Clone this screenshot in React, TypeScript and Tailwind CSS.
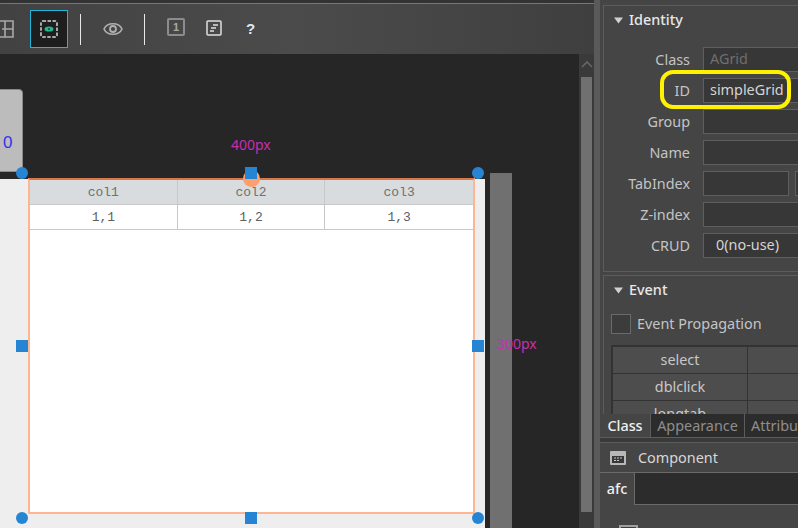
import React from 'react';

const Arrow = () => (
  <svg width="11" height="7" viewBox="0 0 11 7" className="shrink-0">
    <path d="M1 0.5h9l-4.5 6z" fill="#d0d0d0" />
  </svg>
);

const Handle = ({ cls, round }: { cls: string; round?: boolean }) => (
  <div className={`absolute w-[12px] h-[12px] bg-[#2685d3] ${round ? 'rounded-full' : ''} ${cls}`} />
);

const Field = ({ label, value, dim, short, inset }: { label: string; value?: string; dim?: boolean; short?: boolean; inset?: boolean }) => (
  <div className="flex items-center h-[31px]">
    <div className="w-[86px] text-right text-[#c4c4c4] shrink-0">{label}</div>
    <div
      className={`ml-[13px] h-[25px] shrink-0 border border-[#5e5e5e] bg-[#373737] flex items-center pb-[1px] ${inset ? 'pl-[12px]' : 'pl-[6px]'} ${short ? 'w-[86px]' : 'w-[110px]'} ${
        dim ? 'text-[#6e6e6e]' : 'text-[#d4d4d4]'
      }`}
    >
      {value}
    </div>
    {short && <div className="ml-[6px] w-[20px] h-[25px] shrink-0 border border-[#5e5e5e] bg-[#373737]" />}
  </div>
);

const Toolbar = () => (
  <div className="h-[54px] shrink-0 flex flex-col bg-[#3c3c3c]">
    <div className="h-[3px] bg-[#333333]" />
    <div className="h-[1px] bg-[#777777]" />
    <div className="flex-1 flex items-center bg-gradient-to-r from-[#424242] via-[#4b4b4b] to-[#3f3f3f]">
      <svg width="14" height="18" viewBox="0 0 14 18" className="ml-0 mr-[16px]">
        <path d="M-2 1h15v16H-2M2 9h11M5 1v16" fill="none" stroke="#a8a8a8" strokeWidth="1.6" />
      </svg>
      <div className="w-[38px] h-[38px] bg-[#1e1e1e] border border-[#22b5dc] flex items-center justify-center">
        <svg width="18" height="18" viewBox="0 0 18 18">
          <rect x="1" y="1" width="16" height="16" rx="1.5" fill="none" stroke="#a8a8a8" strokeWidth="2" strokeDasharray="3.5 1.5" />
          <ellipse cx="9" cy="9" rx="4.5" ry="2.6" fill="#25b68f" />
          <circle cx="9" cy="9" r="1" fill="#12443a" />
        </svg>
      </div>
      <div className="ml-[12px] w-[1px] h-[31px] bg-[#e8e8e8]" />
      <svg width="20" height="14" viewBox="0 0 20 14" className="ml-[22px]">
        <path d="M1 7c3-7 15-7 18 0c-3 7-15 7-18 0z" fill="none" stroke="#b0b0b0" strokeWidth="1.6" />
        <circle cx="10" cy="7" r="3" fill="none" stroke="#b0b0b0" strokeWidth="1.8" />
      </svg>
      <div className="ml-[21px] w-[1px] h-[31px] bg-[#e8e8e8]" />
      <div className="ml-[22px] mb-[4px] w-[18px] h-[18px] rounded-[2px] border-2 border-[#8c8c8c] flex items-center justify-center text-[11px] font-bold text-[#a8a8a8] font-['Liberation_Sans']">
        1
      </div>
      <svg width="16" height="16" viewBox="0 0 16 16" className="ml-[21px] mb-[2px]">
        <rect x="1" y="1" width="14" height="14" rx="1" fill="none" stroke="#e0e0e0" strokeWidth="1.5" />
        <path d="M7 5h5M5 8h5M4 11h4" fill="none" stroke="#e0e0e0" strokeWidth="1.5" />
      </svg>
      <div className="ml-[24px] text-[15px] font-bold text-[#e4e8f0] font-['Liberation_Sans']">?</div>
    </div>
  </div>
);

const GridCell = ({ children, head, last }: { children: string; head?: boolean; last?: boolean }) => (
  <div
    className={`flex items-center justify-center pt-[1px] border-b border-[#c8c8c8] ${last ? '' : 'border-r'} ${
      head ? 'h-[25px] bg-[#d8dcde] text-[#707070]' : 'h-[25px] bg-white text-[#606060]'
    }`}
  >
    {children}
  </div>
);

const Canvas = () => (
  <div className="relative flex-1 bg-[#262626] overflow-hidden">
    {/* previous component on the stage */}
    <div className="absolute left-[-10px] top-[35px] w-[33px] h-[83px] bg-[#bcbcbc] rounded-[4px] border border-[#8a8a8a]" />
    <div className="absolute left-[3px] top-[79px] text-[17px] leading-[20px] text-[#3333ee] font-['Liberation_Sans']">0</div>
    <div className="absolute left-[490px] top-[119px] w-[22px] h-[355px] bg-[#707070]" />
    <div className="absolute left-[231px] top-[82px] text-[14px] leading-[18px] text-[#c72fb0] font-['Noto_Sans']">400px</div>
    <div className="absolute left-[497px] top-[281px] text-[14px] leading-[18px] text-[#c72fb0] font-['Noto_Sans']">300px</div>

    {/* stage */}
    <div className="absolute left-0 top-[125px] w-[485px] h-[349px] bg-[#eeeeee]" />
    <div className="absolute left-[28px] top-[124px] w-[447px] h-[336px] bg-white border-2 border-[#ffb592] border-t-[#d9764a] font-['Liberation_Mono'] text-[13px]">
      <div className="grid grid-cols-3">
        <GridCell head>col1</GridCell>
        <GridCell head>col2</GridCell>
        <GridCell head last>col3</GridCell>
        <GridCell>1,1</GridCell>
        <GridCell>1,2</GridCell>
        <GridCell last>1,3</GridCell>
      </div>
    </div>

    {/* selection handles */}
    <div className="absolute left-[243px] top-[116px] w-[17px] h-[17px] rounded-full bg-[#ff9f6c]" />
    <Handle round cls="left-[16px] top-[113px]" />
    <Handle cls="left-[245px] top-[113px]" />
    <Handle round cls="left-[472px] top-[113px]" />
    <Handle cls="left-[16px] top-[286px]" />
    <Handle cls="left-[472px] top-[286px]" />
    <Handle round cls="left-[16px] top-[458px]" />
    <Handle cls="left-[245px] top-[458px]" />
    <Handle round cls="left-[472px] top-[458px]" />

    {/* vertical scrollbar */}
    <div className="absolute right-0 top-0 bottom-0 w-[15px] bg-[#3a3a3a]">
      <svg width="12" height="8" viewBox="0 0 12 8" className="absolute left-[2px] top-[6px]">
        <path d="M1 7l5-5l5 5" fill="none" stroke="#666666" strokeWidth="1.6" />
      </svg>
      <div className="absolute left-[2px] w-[11px] top-[23px] h-[435px] bg-[#707070]" />
    </div>
  </div>
);

const RightPanel = () => (
  <div className="flex-1 min-w-0 flex flex-col bg-[#454545] font-['Noto_Sans'] text-[14.4px] overflow-hidden">
    <div className="relative h-[414px] shrink-0 overflow-hidden pl-[3px]">
      <div className="h-[5px]" />
      {/* Identity */}
      <div className="h-[267px] border border-[#5c5c5c] border-r-0">
        <div className="h-[28px] flex items-center pl-[9px] gap-[5px] font-medium text-[#e8e8e8]">
          <Arrow />
          <span>Identity</span>
        </div>
        <div className="mt-[10px]">
          <Field label="Class" value="AGrid" dim />
          <Field label="ID" value="simpleGrid" />
          <Field label="Group" />
          <Field label="Name" />
          <Field label="TabIndex" short />
          <Field label="Z-index" />
          <Field label="CRUD" value="0(no-use)" inset />
        </div>
      </div>
      <div className="absolute left-[60px] top-[70px] w-[131px] h-[39px] border-[4px] border-[#fff200] rounded-[13px]" />
      {/* Event */}
      <div className="mt-[3px] h-[160px] border border-[#5c5c5c] border-r-0">
        <div className="h-[28px] flex items-center pl-[9px] gap-[5px] font-medium text-[#e8e8e8]">
          <Arrow />
          <span>Event</span>
        </div>
        <div className="flex items-center mt-[7px] pl-[7px] h-[26px] text-[#c4c4c4]">
          <div className="w-[20px] h-[20px] border border-[#6a6a6a] bg-[#3c3c3c]" />
          <span className="ml-[6px]">Event Propagation</span>
        </div>
        <div className="ml-[7px] mt-[8px] border-2 border-[#333333] border-r-0 grid grid-cols-[134px_1fr] bg-[#333333] gap-y-[1px] gap-x-[1px]">
          <div className="h-[26px] pt-[2px] bg-[#4d4d4d] text-center text-[#c8c8c8]">select</div>
          <div className="bg-[#4d4d4d]" />
          <div className="h-[26px] pt-[2px] bg-[#4d4d4d] text-center text-[#c8c8c8]">dblclick</div>
          <div className="bg-[#4d4d4d]" />
          <div className="h-[26px] pt-[2px] bg-[#4d4d4d] text-center text-[#c8c8c8]">longtab</div>
          <div className="bg-[#4d4d4d]" />
        </div>
      </div>
    </div>

    {/* Tabs */}
    <div className="h-[24px] shrink-0 flex bg-[#2c2c2c] border-b border-[#5c5c5c] overflow-hidden whitespace-nowrap">
      <div className="w-[50px] shrink-0 bg-[#454545] font-medium text-[#f0f0f0] flex items-center justify-center pt-[1px]">Class</div>
      <div className="w-[95px] shrink-0 border-l border-r border-[#5c5c5c] text-[#8e8e8e] flex items-center justify-center pt-[1px]">Appearance</div>
      <div className="pl-[6px] shrink-0 text-[#8e8e8e] flex items-center pt-[1px]">Attribute</div>
    </div>
    <div className="h-[5px] shrink-0 bg-[#3a3a3a] border-b border-[#5c5c5c]" />

    {/* Component library */}
    <div className="h-[30px] shrink-0 flex items-center pl-[10px] border-b border-[#6a6a6a] text-[#d8d8d8]">
      <svg width="16" height="16" viewBox="0 0 16 16">
        <rect x="0" y="1" width="16" height="14" rx="1" fill="#b8b8b8" />
        <rect x="2" y="6" width="12" height="7" fill="#383838" />
        <path d="M4 8h2M7 8h2M10 8h2M4 10.5h2M7 10.5h2" stroke="#c8c8c8" strokeWidth="1.2" />
      </svg>
      <span className="ml-[12px]">Component</span>
    </div>
    <div className="h-[32px] shrink-0 flex">
      <div className="w-[34px] flex items-center justify-center font-medium text-[#f0f0f0]">afc</div>
      <div className="flex-1 bg-[#2c2c2c] border-l border-b border-[#6a6a6a]" />
    </div>
    <div className="relative flex-1">
      <div className="absolute left-[19px] top-[20px] w-[19px] h-[18px] border-2 border-[#a0a0a0] bg-[#3c3c3c]" />
    </div>
  </div>
);

export default function App() {
  return (
    <div className="w-[798px] h-[528px] flex overflow-hidden bg-[#454545]">
      <div className="w-[594px] shrink-0 flex flex-col">
        <Toolbar />
        <Canvas />
      </div>
      <div className="w-[6px] shrink-0 bg-[#5a5a5a]" />
      <RightPanel />
    </div>
  );
}
